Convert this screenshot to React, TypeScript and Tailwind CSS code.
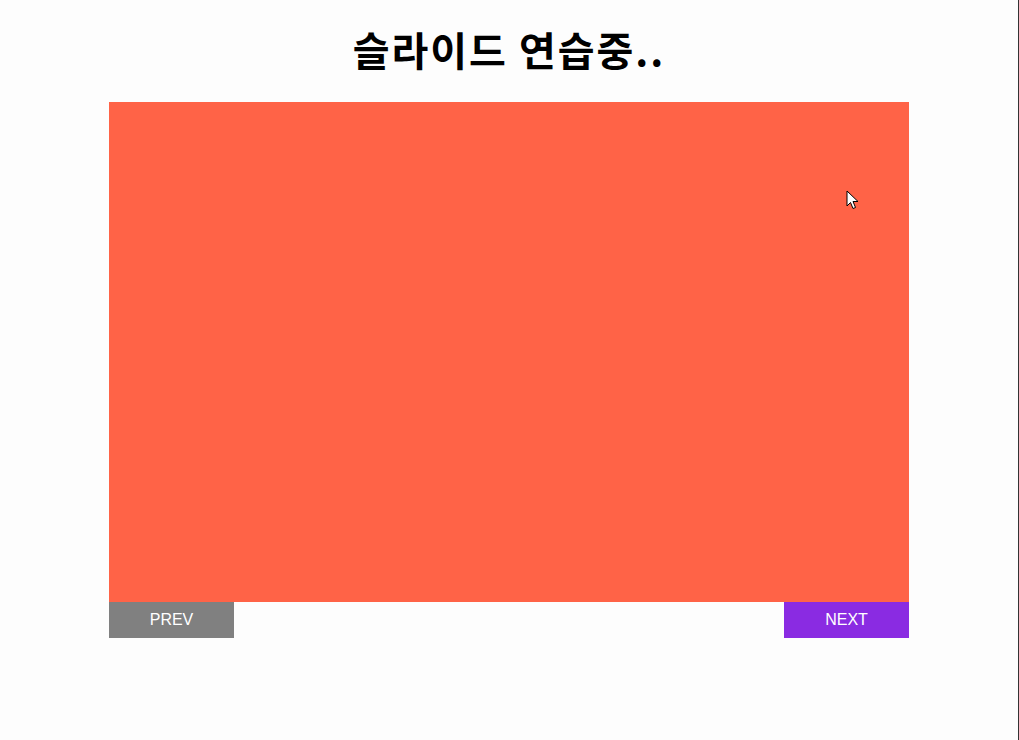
import React, { useState } from 'react';

const slides = ['bg-[#ff6347]', 'bg-[#4682b4]', 'bg-[#3cb371]'];

const Cursor: React.FC = () => (
    <svg
        className="absolute left-[737px] top-[88px]"
        width="14"
        height="20"
        viewBox="0 0 14 20"
    >
        <path
            d="M1 1 L1 16 L4.5 12.5 L7 18.5 L9.5 17.5 L7 11.5 L12 11.5 Z"
            fill="#fff"
            stroke="#000"
            strokeWidth="1"
            strokeLinejoin="miter"
        />
    </svg>
);

const App: React.FC = () => {
    const [index, setIndex] = useState(0);

    const prev = () => setIndex((i) => (i === 0 ? slides.length - 1 : i - 1));
    const next = () => setIndex((i) => (i + 1) % slides.length);

    return (
        <div className="min-h-[740px] w-full bg-[#fdfdfd] border-r border-[#333] font-['Liberation_Sans',Arial,sans-serif]">
            <h1 className="pt-[20px] text-center text-[40px] leading-[58px] tracking-[2px] font-bold text-black font-['Noto_Sans_CJK_KR','Liberation_Sans',sans-serif]">
                슬라이드 연습중..
            </h1>

            <div className="mx-auto mt-[24px] w-[800px]">
                <div className={`relative h-[500px] w-full ${slides[index]}`}>
                    <Cursor />
                </div>
                <div className="flex justify-between">
                    <button
                        onClick={prev}
                        className="h-[36px] w-[125px] bg-[#808080] text-[16px] text-white"
                    >
                        PREV
                    </button>
                    <button
                        onClick={next}
                        className="h-[36px] w-[125px] bg-[#8a2be2] text-[16px] text-white"
                    >
                        NEXT
                    </button>
                </div>
            </div>
        </div>
    );
};

export default App;
